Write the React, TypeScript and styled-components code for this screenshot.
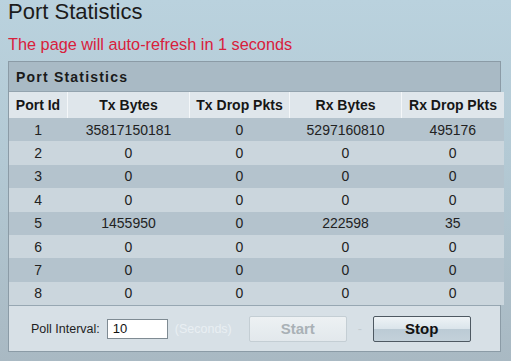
import React from 'react';
import styled, { createGlobalStyle } from 'styled-components';

const GlobalStyle = createGlobalStyle`
  html, body {
    margin: 0;
    padding: 0;
    height: 100%;
  }
  body {
    background: linear-gradient(180deg, #bad2de 0%, #b3c9d4 45%, #a9b9c3 100%);
    font-family: "Liberation Sans", Arial, sans-serif;
    color: #222;
  }
`;

const Page = styled.div`
  width: 511px;
  height: 361px;
  padding: 0 8px;
  box-sizing: border-box;
  overflow: hidden;
`;

const Title = styled.h1`
  margin: 0;
  font-size: 22px;
  font-weight: normal;
  line-height: 24px;
  color: #1c1c1c;
`;

const Notice = styled.div`
  margin-top: 10px;
  font-size: 16.3px;
  line-height: 20px;
  color: #d8203c;
`;

const Panel = styled.section`
  margin-top: 7px;
  width: 493px;
  box-sizing: border-box;
  border: 1px solid #8b9ba6;
  background: #d7e0e6;
`;

const PanelHeader = styled.div`
  height: 29px;
  display: flex;
  align-items: center;
  padding-left: 7px;
  background: #a9bac5;
  border-bottom: 1px solid #93a3ae;
  font-size: 14px;
  font-weight: bold;
  letter-spacing: 1.2px;
  color: #1a1a1a;
`;

const Table = styled.table`
  width: 100%;
  border-collapse: collapse;
  table-layout: fixed;
  font-size: 14px;
`;

const HeadCell = styled.th<{ $w: number }>`
  width: ${({ $w }) => $w}px;
  height: 26px;
  padding: 0;
  background: #dfe6eb;
  border-left: 1px solid #f4f7f9;
  font-weight: bold;
  text-align: center;
  color: #161616;
  &:first-child {
    border-left: none;
  }
`;

const Row = styled.tr<{ $odd: boolean }>`
  background: ${({ $odd }) => ($odd ? '#b4c3cd' : '#cbd6dd')};
`;

const Cell = styled.td`
  height: 23.4px;
  padding: 0;
  text-align: center;
  color: #222;
`;

const Footer = styled.div`
  height: 45px;
  border-top: 1px solid #97a7b2;
  display: flex;
  align-items: center;
  padding-left: 22px;
  background: #d7e0e6;
  font-size: 12.5px;
`;

const Label = styled.span`
  color: #1e1e1e;
`;

const Input = styled.input`
  margin-left: 7px;
  width: 61px;
  height: 20px;
  box-sizing: border-box;
  border: 1px solid #7f8b93;
  background: #fff;
  padding: 0 0 0 5px;
  font-family: "Liberation Sans", Arial, sans-serif;
  font-size: 13px;
  color: #111;
  outline: none;
`;

const Hint = styled.span`
  margin-left: 7px;
  color: #e9eff3;
`;

const Spacer = styled.div`
  width: 17px;
`;

const Button = styled.button<{ $disabled?: boolean }>`
  width: 98px;
  height: 26px;
  box-sizing: border-box;
  border-radius: 2px;
  font-family: "Liberation Sans", Arial, sans-serif;
  font-size: 15px;
  font-weight: bold;
  padding: 0;
  border: 1px solid ${({ $disabled }) => ($disabled ? '#c4ced4' : '#4e5962')};
  color: ${({ $disabled }) => ($disabled ? '#a9b1b6' : '#111')};
  background: ${({ $disabled }) =>
    $disabled
      ? 'linear-gradient(180deg, #edf1f3 0%, #e2e8ec 100%)'
      : 'linear-gradient(180deg, #eef3f6 0%, #dbe5eb 48%, #bccbd5 52%, #c3d1da 100%)'};
`;

const Sep = styled.span`
  width: 26px;
  text-align: center;
  color: #c3ccd2;
`;

const cols = [
  { label: 'Port Id', w: 58 },
  { label: 'Tx Bytes', w: 121 },
  { label: 'Tx Drop Pkts', w: 99 },
  { label: 'Rx Bytes', w: 111 },
  { label: 'Rx Drop Pkts', w: 102 },
];

const rows = [
  ['1', '35817150181', '0', '5297160810', '495176'],
  ['2', '0', '0', '0', '0'],
  ['3', '0', '0', '0', '0'],
  ['4', '0', '0', '0', '0'],
  ['5', '1455950', '0', '222598', '35'],
  ['6', '0', '0', '0', '0'],
  ['7', '0', '0', '0', '0'],
  ['8', '0', '0', '0', '0'],
];

const App = () => {
  return (
    <Page>
      <GlobalStyle />
      <Title>Port Statistics</Title>
      <Notice>The page will auto-refresh in 1 seconds</Notice>
      <Panel>
        <PanelHeader>Port Statistics</PanelHeader>
        <Table>
          <thead>
            <tr>
              {cols.map((c) => (
                <HeadCell key={c.label} $w={c.w}>{c.label}</HeadCell>
              ))}
            </tr>
          </thead>
          <tbody>
            {rows.map((r, i) => (
              <Row key={r[0]} $odd={i % 2 === 0}>
                {r.map((v, j) => (
                  <Cell key={j}>{v}</Cell>
                ))}
              </Row>
            ))}
          </tbody>
        </Table>
        <Footer>
          <Label>Poll Interval:</Label>
          <Input defaultValue="10" />
          <Hint>(Seconds)</Hint>
          <Spacer />
          <Button $disabled disabled>Start</Button>
          <Sep>-</Sep>
          <Button>Stop</Button>
        </Footer>
      </Panel>
    </Page>
  );
};

export default App;
